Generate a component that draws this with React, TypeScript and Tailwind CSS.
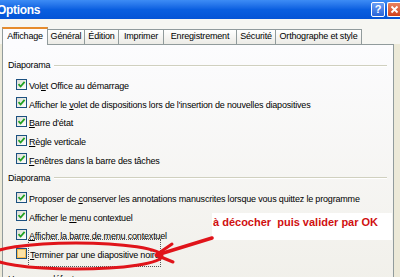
import React from "react";

const ui = { fontFamily: '"Liberation Sans Narrow", "Liberation Sans", Arial, sans-serif' };

function Check({ checked = true, hover = false }: { checked?: boolean; hover?: boolean }) {
  return (
    <div
      className={
        "w-[11px] h-[11px] shrink-0 border border-[#1c5180] flex items-center justify-center " +
        (hover ? "bg-[#fbe3a6] shadow-[inset_0_0_0_1px_#f8b94b]" : "bg-gradient-to-br from-[#dcdcd6] to-white")
      }
    >
      {checked && (
        <svg width="9" height="9" viewBox="0 0 9 9">
          <path d="M1.5 4.2 L3.6 6.5 L7.6 1.8" stroke="#21a121" strokeWidth="1.8" fill="none" />
        </svg>
      )}
    </div>
  );
}

function Label({ pre, key_, post }: { pre: string; key_: string; post: string }) {
  return (
    <span className="text-[9px] tracking-[-0.18px] text-black whitespace-nowrap leading-none">
      {pre}
      <span className="underline">{key_}</span>
      {post}
    </span>
  );
}

function Row({ pre, k, post, checked = true, hover = false, focus = false }: any) {
  return (
    <div className="h-[18.6px] flex items-center gap-[2px] pl-[13px]">
      <Check checked={checked} hover={hover} />
      <div className={focus ? "border border-dotted border-[#555] px-[1px] py-[1px] -ml-[1px]" : ""}>
        <Label pre={pre} key_={k} post={post} />
      </div>
    </div>
  );
}

function Group({ title }: { title: string }) {
  return (
    <div className="h-[19px] flex items-center gap-[4px] pl-[5px] pr-[6px]">
      <span className="text-[9px] tracking-[-0.18px] text-black leading-none">{title}</span>
      <div className="flex-1 h-[2px] border-t border-[#d0d0bf] border-b border-b-white" />
    </div>
  );
}

export default function App() {
  const tabs: [string, string][] = [
    ["Général", "w-[37px]"],
    ["Édition", "w-[34px]"],
    ["Imprimer", "w-[45px]"],
    ["Enregistrement", "w-[73px]"],
    ["Sécurité", "w-[39px]"],
    ["Orthographe et style", "w-[86px]"],
  ];
  return (
    <div className="w-[400px] h-[277px] overflow-hidden relative bg-[#ece9d8]" style={ui}>
      {/* title bar */}
      <div className="h-[19px] bg-gradient-to-b from-[#3d8cf5] via-[#0a5fe0] to-[#0554d6] flex items-center justify-between">
        <span className="text-white font-bold text-[12px] -ml-[3px] tracking-tight" style={{ fontFamily: '"Liberation Sans", Arial, sans-serif' }}>
          Options
        </span>
        <div className="flex items-center gap-[2px] pr-0">
          <div className="w-[14px] h-[15px] rounded-[2px] border border-white bg-gradient-to-b from-[#6a9ef5] to-[#2a63d8] text-white text-[11px] font-bold flex items-center justify-center leading-none">
            ?
          </div>
          <div className="w-[13px] h-[15px] rounded-l-[2px] border border-r-0 border-white bg-gradient-to-b from-[#e8825f] to-[#d1401a] flex items-center justify-center">
            <svg width="9" height="9" viewBox="0 0 9 9">
              <path d="M1.5 1.5 L7.5 7.5 M7.5 1.5 L1.5 7.5" stroke="white" strokeWidth="1.8" />
            </svg>
          </div>
        </div>
      </div>
      <div className="h-[8px] bg-[#f6f6f2]" />
      {/* tabs */}
      <div className="bg-[#f6f6f2] h-[17px] flex items-end pl-[2px] relative">
        <div className="w-[46px] h-[18px] -mb-[1px] z-10 bg-[#fcfcfe] border border-b-0 border-[#919b9c] border-t-[2px] border-t-[#e68b2c] flex items-center justify-center text-[9px] tracking-[-0.18px] text-black">
          Affichage
        </div>
        {tabs.map(([t, w]) => (
          <div
            key={t}
            className={
              w +
              " h-[15px] bg-gradient-to-b from-white to-[#ecebe6] border border-b-0 border-l-0 border-[#919b9c] flex items-center justify-center text-[9px] tracking-[-0.18px] text-black whitespace-nowrap"
            }
          >
            {t}
          </div>
        ))}
      </div>
      {/* panel */}
      <div className="ml-[2px] mr-[6px] h-[240px] border border-[#919b9c] bg-gradient-to-b from-[#fcfcfe] to-[#f1f0ea] pt-[11px]">
        <Group title="Diaporama" />
        <Row pre="Vol" k="e" post="t Office au démarrage" />
        <Row pre="Afficher le " k="v" post="olet de dispositions lors de l'insertion de nouvelles diapositives" />
        <Row pre="" k="B" post="arre d'état" />
        <Row pre="" k="R" post="ègle verticale" />
        <Row pre="" k="F" post="enêtres dans la barre des tâches" />
        <div className="h-[1px]" />
        <Group title="Diaporama" />
        <Row pre="Proposer de " k="c" post="onserver les annotations manuscrites lorsque vous quittez le programme" />
        <Row pre="Afficher le " k="m" post="enu contextuel" />
        <Row pre="" k="A" post="fficher la barre de menu contextuel" />
        <Row pre="" k="T" post="erminer par une diapositive noire" checked={false} hover focus />
        <div className="h-[22px] pl-[5px] flex items-end text-[9px] tracking-[-0.18px] leading-none">Usage par défaut</div>
      </div>

      {/* annotation */}
      <div className="absolute left-[212px] top-[213px] w-[180px] h-[27px] bg-white">
        <span className="absolute left-[1px] top-[1px] text-[11px] font-bold text-[#d01010] whitespace-nowrap" style={{ fontFamily: '"Liberation Sans", Arial, sans-serif' }}>
          à décocher&nbsp; puis valider par OK
        </span>
      </div>
      <svg className="absolute left-0 top-0 pointer-events-none" width="400" height="277">
        <ellipse cx="76" cy="256" rx="86" ry="13" fill="none" stroke="#e0141a" strokeWidth="3" />
        <path d="M212 238 L160 254" stroke="#e0141a" strokeWidth="3.5" fill="none" strokeLinecap="round" />
        <path d="M172 244 L156 255 L173 262" stroke="#e0141a" strokeWidth="3" fill="none" strokeLinecap="round" strokeLinejoin="round" />
      </svg>
    </div>
  );
}
